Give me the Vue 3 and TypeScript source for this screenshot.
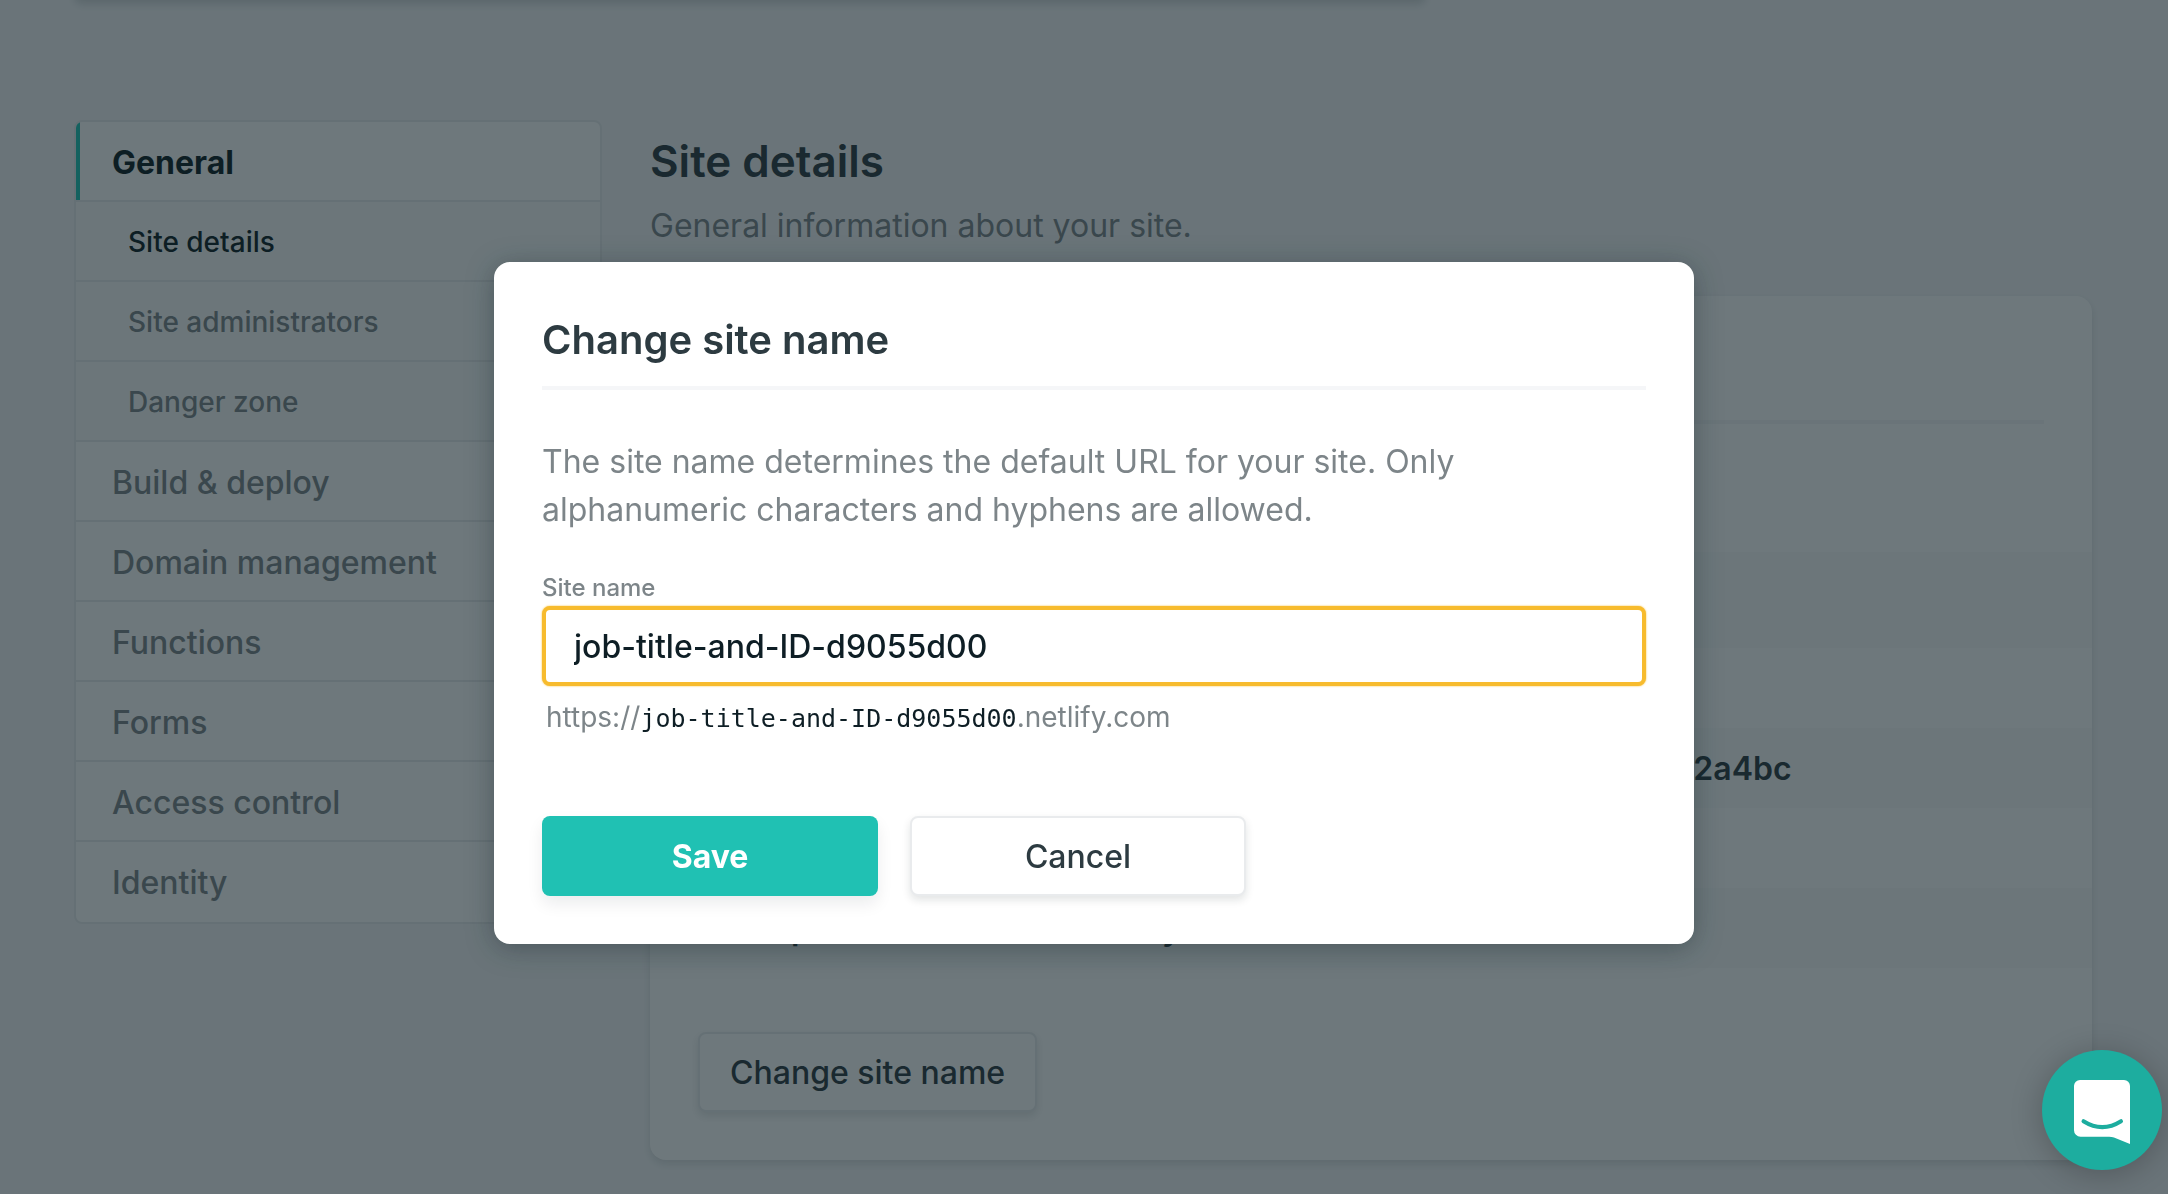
<script setup lang="ts">
import { ref } from 'vue'

interface NavItem {
  label: string
  sub?: boolean
  active?: boolean
  current?: boolean
}

interface InfoRow {
  id: number
  term?: string
  value?: string
  tall?: boolean
}

const navItems: NavItem[] = [
  { label: 'General', active: true },
  { label: 'Site details', sub: true, current: true },
  { label: 'Site administrators', sub: true },
  { label: 'Danger zone', sub: true },
  { label: 'Build & deploy' },
  { label: 'Domain management' },
  { label: 'Functions' },
  { label: 'Forms' },
  { label: 'Access control' },
  { label: 'Identity' },
]

const infoRows: InfoRow[] = [
  { id: 1 },
  { id: 2, tall: true },
  { id: 3 },
  { id: 4, term: 'API ID', value: 'd9055d00-5a4d-4d0e-9d3b-6d8e6082a4bc' },
  { id: 5 },
  { id: 6, term: 'Last update', value: 'Today' },
]

const siteName = ref('job-title-and-ID-d9055d00')
</script>

<template>
  <div class="page">
    <div class="previous-card"></div>
    <div class="columns">
      <nav class="sidebar" aria-label="Settings">
        <a
          v-for="item in navItems"
          :key="item.label"
          href="#"
          class="nav-item"
          :class="{ sub: item.sub, active: item.active, current: item.current }"
          >{{ item.label }}</a
        >
      </nav>
      <main class="content">
        <h1 class="page-title">Site details</h1>
        <p class="page-lead">General information about your site.</p>
        <section class="card">
          <div class="card-head"></div>
          <dl class="info">
            <div v-for="row in infoRows" :key="row.id" class="info-row" :class="{ tall: row.tall }">
              <dt v-if="row.term">{{ row.term }}</dt>
              <dd v-if="row.value">{{ row.value }}</dd>
            </div>
          </dl>
          <button type="button" class="button secondary">Change site name</button>
        </section>
      </main>
    </div>

    <div class="overlay">
      <form class="modal" role="dialog" aria-labelledby="dialog-title" @submit.prevent>
        <h2 id="dialog-title" class="modal-title">Change site name</h2>
        <p class="description">
          The site name determines the default URL for your site. Only alphanumeric characters and
          hyphens are allowed.
        </p>
        <label class="field-label" for="site-name">Site name</label>
        <input id="site-name" v-model="siteName" class="field" type="text" spellcheck="false" />
        <p class="hint">https://<code>{{ siteName }}</code>.netlify.com</p>
        <div class="actions">
          <button type="submit" class="button primary">Save</button>
          <button type="button" class="button secondary">Cancel</button>
        </div>
      </form>
    </div>

    <button type="button" class="chat" aria-label="Open chat">
      <svg viewBox="0 0 120 120" width="120" height="120" aria-hidden="true">
        <path
          class="bubble"
          d="M38 30H82A6 6 0 0 1 88 36V94L72 87.500Q70 86.700 67 86.700H38.500A6.500 6.500 0 0 1 32 80.200V36A6 6 0 0 1 38 30Z"
        />
        <path class="smile" d="M41.500 71.200Q60.300 83 79 71.200" />
      </svg>
    </button>
  </div>
</template>

<style>
body {
  margin: 0;
}
</style>

<style scoped>
.page {
  box-sizing: border-box;
  min-height: 100vh;
  padding: 0 76px 32px 74px;
  overflow: hidden;
  background: #f5f6f8;
  color: #2d3b41;
  font-family: Inter, 'Liberation Sans', sans-serif;
  font-size: 32px;
}

h1,
h2,
p,
dl,
dd {
  margin: 0;
}

.previous-card {
  width: 67%;
  height: 16px;
  margin-top: -16px;
  border-radius: 16px;
  background: #fff;
  box-shadow: 0 4px 8px rgba(14, 30, 37, 0.16);
}

.columns {
  display: flex;
  align-items: flex-start;
  gap: 48px;
  padding-top: 120px;
}

.sidebar {
  box-sizing: border-box;
  flex: 0 0 528px;
  overflow: hidden;
  border: 2px solid #e9ebed;
  border-radius: 8px;
  background: #fff;
}

.nav-item {
  display: flex;
  box-sizing: border-box;
  align-items: center;
  height: 80px;
  padding: 2px 36px 0;
  border-bottom: 2px solid #e9ebed;
  color: #7d8589;
  font-weight: 500;
  text-decoration: none;
}

.nav-item:last-child {
  border-bottom-color: transparent;
}

.nav-item.active {
  box-shadow: inset 4px 0 #20c6b7;
  color: #0e1e25;
  font-weight: 700;
}

.nav-item.sub {
  padding-left: 52px;
  background: #fafbfb;
  font-size: 28px;
}

.nav-item.current {
  color: #0e1e25;
}

.content {
  flex: 1;
  min-width: 0;
  padding-top: 8px;
}

.page-title {
  font-size: 44px;
  font-weight: 600;
  line-height: 66px;
}

.page-lead {
  padding: 8px 0 46px;
  color: #7d8589;
  line-height: 48px;
}

.card {
  padding: 48px;
  border-radius: 16px;
  background: #fff;
  box-shadow: 0 4px 8px rgba(14, 30, 37, 0.12);
}

.card-head {
  height: 76px;
  border-bottom: 4px solid #f5f6f8;
}

.modal-title {
  padding-bottom: 16px;
  border-bottom: 4px solid #f5f6f8;
  font-size: 40px;
  font-weight: 600;
  line-height: 60px;
}

.info {
  margin: 48px -48px 64px;
}

.info-row {
  display: grid;
  grid-template-columns: 388px 1fr;
  align-items: center;
  height: 80px;
  padding: 0 48px;
  font-weight: 600;
}

.info-row:nth-child(even) {
  background: #fafbfb;
}

.info-row.tall {
  height: 96px;
}

.button {
  box-sizing: border-box;
  height: 80px;
  padding: 0 30px;
  border: 0;
  border-radius: 8px;
  font: inherit;
  cursor: pointer;
}

.secondary {
  border: 2px solid #e9ebed;
  background: #fff;
  box-shadow: 0 4px 8px rgba(14, 30, 37, 0.12);
  color: #2d3b41;
  font-weight: 500;
}

.primary {
  background: #20c1b3;
  box-shadow: 0 8px 16px rgba(14, 30, 37, 0.08);
  color: #fff;
  font-weight: 700;
}

.overlay {
  position: fixed;
  inset: 0;
  display: flex;
  box-sizing: border-box;
  align-items: center;
  justify-content: center;
  padding: 12px 0 0 20px;
  background: rgba(14, 30, 37, 0.6);
}

.modal {
  box-sizing: border-box;
  width: 1200px;
  max-width: 100%;
  padding: 48px;
  border-radius: 16px;
  background: #fff;
  box-shadow: 0 4px 28px rgba(14, 30, 37, 0.36);
}

.description {
  max-width: 960px;
  margin: 48px 0 36px;
  color: #7d8589;
  line-height: 48px;
}

.field-label {
  display: block;
  color: #7d8589;
  font-size: 24px;
  font-weight: 500;
  line-height: 36px;
}

.field {
  display: block;
  box-sizing: border-box;
  width: 100%;
  height: 80px;
  padding: 0 28px;
  border: 4px solid #f7bb2d;
  border-radius: 8px;
  outline: 0;
  background: #fff;
  box-shadow: 0 0 2px #f7bb2d;
  color: #0e1e25;
  font: inherit;
  font-weight: 500;
}

.hint {
  padding: 10px 4px 78px;
  color: #7d8589;
  font-size: 28px;
  line-height: 42px;
}

.hint code {
  color: #0e1e25;
  font-family: 'DejaVu Sans Mono', monospace;
  font-size: 25px;
  line-height: 1;
}

.actions {
  display: flex;
  gap: 32px;
}

.actions .button {
  width: 336px;
}

.chat {
  position: fixed;
  right: 6px;
  bottom: 24px;
  width: 120px;
  height: 120px;
  padding: 0;
  border: 0;
  border-radius: 50%;
  background: #1dad9f;
  box-shadow: 0 4px 32px rgba(0, 0, 0, 0.24);
  cursor: pointer;
}

.chat svg {
  display: block;
}

.bubble {
  fill: #fff;
}

.smile {
  fill: none;
  stroke: #1dad9f;
  stroke-width: 4;
  stroke-linecap: round;
}
</style>
